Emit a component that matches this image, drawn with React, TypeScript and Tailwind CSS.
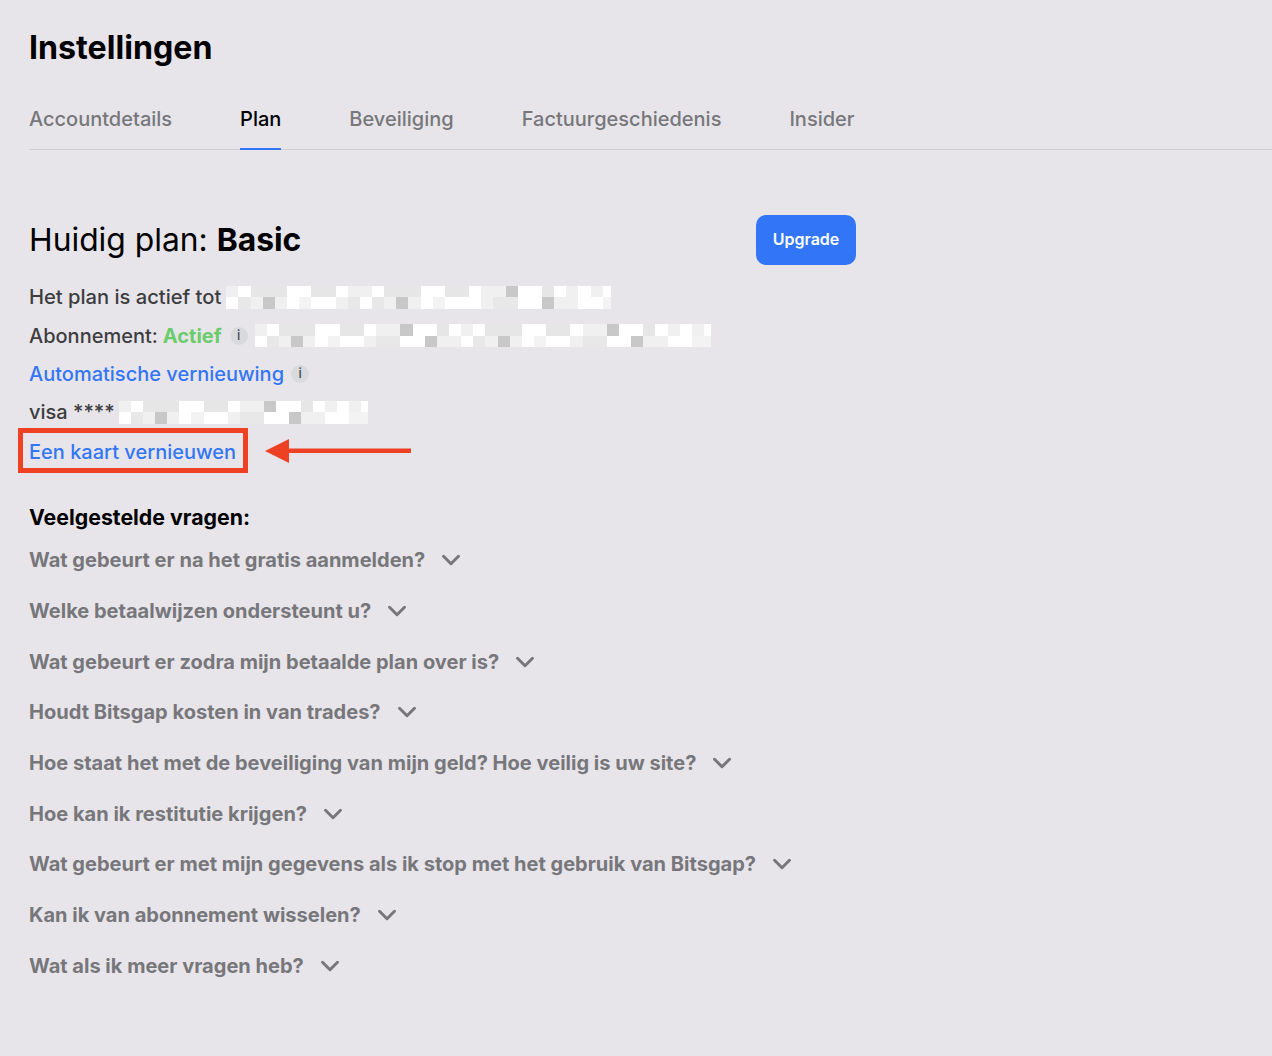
import { ChevronDown } from "lucide-react";

const tabs = ["Accountdetails", "Plan", "Beveiliging", "Factuurgeschiedenis", "Insider"];

const faqs = [
  "Wat gebeurt er na het gratis aanmelden?",
  "Welke betaalwijzen ondersteunt u?",
  "Wat gebeurt er zodra mijn betaalde plan over is?",
  "Houdt Bitsgap kosten in van trades?",
  "Hoe staat het met de beveiliging van mijn geld? Hoe veilig is uw site?",
  "Hoe kan ik restitutie krijgen?",
  "Wat gebeurt er met mijn gegevens als ik stop met het gebruik van Bitsgap?",
  "Kan ik van abonnement wisselen?",
  "Wat als ik meer vragen heb?",
];

// pixelated censor blocks: w white, a light grey, b lighter, c dark, d mid, e near white
const cellColors: Record<string, string> = {
  w: "bg-white",
  a: "bg-[#e6e6e6]",
  b: "bg-[#f0f0f0]",
  c: "bg-[#c8c8c8]",
  d: "bg-[#e8e8e8]",
  e: "bg-[#f3f3f3]",
};

const blurDate = ["bwaaawwaawbbwaaawwaawbbcwwawbwbw", "wdbcbwewwbdwdbcbwewwwbddwwcbbwwe"];
const blurSub = ["bwaaawwaawbbcwwawbwaaawwaawbbcwwawbwbw", "wdbcbwewwbddwwcbbwdbcbwewwbddwwcbbwwee"];
const blurCard = ["bwaaawwaawbbcwwawbwbw", "wdbcbwewwbddwwcbbwwee"];

function Censor({ rows, width }: { rows: string[]; width: number }) {
  return (
    <div className="flex flex-col overflow-hidden blur-[0.4px]" style={{ width }}>
      {rows.map((row, i) => (
        <div key={i} className="flex h-[11.5px]">
          {row.split("").map((c, j) => (
            <div key={j} className={`w-[12.15px] shrink-0 ${cellColors[c]}`} />
          ))}
        </div>
      ))}
    </div>
  );
}

function InfoDot() {
  return (
    <span className="flex h-[18px] w-[18px] items-center justify-center rounded-full bg-[#d9dade] text-[13px] font-medium text-[#4a4b50]">
      i
    </span>
  );
}

export default function App() {
  return (
    <div className="min-h-[1056px] bg-[#e7e5ea] pl-[29px] pt-[27px] font-['Inter',sans-serif] text-[20px] font-medium text-[#3d3d40]">
      <h1 className="text-[32.2px] font-bold leading-[42px] text-black">Instellingen</h1>

      <div className="mt-[30px] flex gap-[68px] border-b border-[#cfcfd3]">
        {tabs.map((tab) => (
          <div
            key={tab}
            className={`-mb-px h-[51px] border-b-2 pt-[8px] leading-[24px] ${
              tab === "Plan" ? "border-[#3276f7] text-black" : "border-transparent text-[#77777b]"
            }`}
          >
            {tab}
          </div>
        ))}
      </div>

      <div className="mt-[65px] flex w-[827px] items-center justify-between">
        <div className="text-[31.8px] font-normal leading-[48px] text-black">
          Huidig plan: <span className="font-bold">Basic</span>
        </div>
        <button className="h-[50px] w-[100px] rounded-[10px] bg-[#3276f7] pb-[2px] text-[16px] font-semibold text-white">
          Upgrade
        </button>
      </div>

      <div className="mt-[13px] flex h-[38px] items-center gap-[5px]">
        <span className="text-[20.15px]">Het plan is actief tot</span>
        <Censor rows={blurDate} width={385} />
      </div>
      <div className="flex h-[39px] items-center">
        <span>Abonnement:</span>
        <span className="ml-[5px] font-bold text-[#6ccb6b]">Actief</span>
        <span className="ml-[8px]"><InfoDot /></span>
        <span className="ml-[7px]"><Censor rows={blurSub} width={456} /></span>
      </div>
      <div className="flex h-[38px] items-center gap-[7px]">
        <span className="text-[#3276f7]">Automatische vernieuwing</span>
        <InfoDot />
      </div>
      <div className="flex h-[38px] items-center gap-[4px]">
        <span>visa ****</span>
        <Censor rows={blurCard} width={249} />
      </div>

      <div className="-mt-[3px] flex items-center">
        <div className="-ml-[11px] flex h-[45px] w-[230px] items-center border-[5px] border-[#ee4023] pl-[6px] pt-[2px] text-[#3276f7]">
          Een kaart vernieuwen
        </div>
        <svg className="ml-[17px]" width="146" height="26" viewBox="0 0 146 26">
          <path d="M0 13 L24 1 V10.5 H146 V15 H24 V25 Z" fill="#ee4023" />
        </svg>
      </div>

      <h2 className="mt-[30px] text-[21.3px] font-bold leading-[28px] text-black">Veelgestelde vragen:</h2>

      <div className="mt-[4px] flex flex-col">
        {faqs.map((q) => (
          <div key={q} className="flex h-[50.7px] items-center gap-[11px] text-[20.04px] font-bold text-[#77777b]">
            <span>{q}</span>
            <ChevronDown size={30} strokeWidth={2.4} />
          </div>
        ))}
      </div>
    </div>
  );
}
